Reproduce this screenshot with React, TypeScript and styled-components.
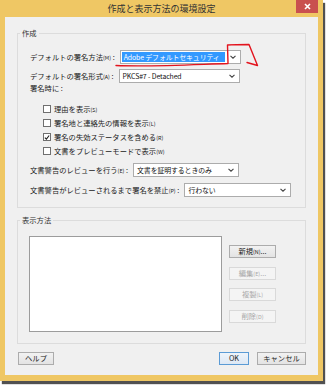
import React from 'react';
import styled, { createGlobalStyle } from 'styled-components';

const GlobalStyle = createGlobalStyle`
  html, body {
    margin: 0;
    padding: 0;
    background: #ffffff;
  }
  body {
    font-family: "Noto Sans CJK JP", "Noto Sans", sans-serif;
    color: #1a1a1a;
  }
`;

const Stage = styled.div`
  position: relative;
  width: 327px;
  height: 386px;
`;

const Window = styled.div`
  width: 323px;
  height: 381px;
  box-sizing: border-box;
  padding: 0 5px 6px 5px;
  background: #efc764;
  display: flex;
  flex-direction: column;
  box-shadow: 2px 3px 1px rgba(50, 50, 50, 0.85);
`;

const TitleBar = styled.div`
  height: 17px;
  display: grid;
  grid-template-columns: 1fr auto 1fr;
  align-items: start;
`;

const Title = styled.div`
  grid-column: 2;
  font-size: 9px;
  line-height: 17px;
  color: #333;
  white-space: nowrap;
`;

const CloseButton = styled.div`
  grid-column: 3;
  justify-self: end;
  width: 22px;
  height: 13px;
  background: #c9504f;
  display: flex;
  align-items: center;
  justify-content: center;
`;

const Content = styled.div`
  flex: 1;
  background: #f0f0f0;
  padding: 11px 12px 0 12px;
  display: flex;
  flex-direction: column;
`;

const Group = styled.fieldset<{ $pad: string; $mt?: number }>`
  margin: ${p => p.$mt ?? 0}px 0 0 0;
  padding: ${p => p.$pad};
  border: 1px solid #dcdcdc;
  min-width: 0;
`;

const GroupTitle = styled.legend<{ $ml: number }>`
  margin-left: ${p => p.$ml}px;
  padding: 0 2px;
  font-size: 7.3px;
  line-height: 10px;
  color: #333;
`;

const Column = styled.div`
  display: flex;
  flex-direction: column;
`;

const FieldRow = styled.div<{ $mt?: number }>`
  display: flex;
  align-items: center;
  gap: 5px;
  height: 14px;
  margin-top: ${p => p.$mt ?? 0}px;
`;

const Label = styled.span`
  font-size: 7.3px;
  line-height: 10px;
  white-space: nowrap;
`;

const Key = styled.span`
  font-size: 5.4px;
`;

const Caption = styled.div`
  height: 10px;
  font-size: 7.3px;
  line-height: 10px;
`;

const CheckRow = styled.label<{ $mt?: number }>`
  display: flex;
  align-items: center;
  gap: 3px;
  height: 14px;
  padding-left: 13px;
  margin-top: ${p => p.$mt ?? 0}px;
`;

const Box = styled.span`
  width: 8px;
  height: 8px;
  box-sizing: border-box;
  border: 1px solid #6f6f6f;
  background: #fff;
  display: flex;
  align-items: center;
  justify-content: center;
`;

const Select = styled.div<{ $w: number }>`
  width: ${p => p.$w}px;
  height: 14px;
  box-sizing: border-box;
  border: 1px solid #acacac;
  background: #fff;
  display: flex;
  align-items: stretch;
`;

const SelectValue = styled.div<{ $hi?: boolean }>`
  flex: 1;
  margin: ${p => (p.$hi ? '1px' : '0')};
  padding-left: ${p => (p.$hi ? '2px' : '3px')};
  background: ${p => (p.$hi ? '#3399ff' : 'transparent')};
  color: ${p => (p.$hi ? '#fff' : '#111')};
  font-size: 6.9px;
  letter-spacing: -0.1px;
  line-height: ${p => (p.$hi ? '10px' : '12px')};
  white-space: nowrap;
  overflow: hidden;
`;

const SelectArrow = styled.div`
  width: 14px;
  display: flex;
  align-items: center;
  justify-content: center;
`;

const ManageRow = styled.div`
  display: flex;
  gap: 7px;
`;

const ListBox = styled.div`
  width: 193px;
  height: 96px;
  box-sizing: border-box;
  border: 1px solid #9c9c9c;
  background: #fff;
`;

const ButtonColumn = styled.div`
  display: flex;
  flex-direction: column;
  gap: 8.5px;
  margin-top: 9px;
`;

const Button = styled.div<{ $w: number; $disabled?: boolean; $default?: boolean }>`
  width: ${p => p.$w}px;
  height: 13px;
  box-sizing: border-box;
  border: 1px solid ${p => (p.$disabled ? '#d9d9d9' : p.$default ? '#5b9bd5' : '#acacac')};
  background: ${p =>
    p.$disabled ? '#f4f4f4' : p.$default ? 'linear-gradient(#eef4fb, #dde8f4)' : 'linear-gradient(#f2f2f2, #e3e3e3)'};
  color: ${p => (p.$disabled ? '#a8a8a8' : '#222')};
  font-size: 7.3px;
  line-height: 11px;
  text-align: center;
  white-space: nowrap;
`;

const Footer = styled.div`
  display: flex;
  align-items: center;
  margin-top: 8px;
  padding-left: 1px;
  gap: 8px;
`;

const Spacer = styled.div`
  flex: 1;
`;

const Annotation = styled.svg`
  position: absolute;
  left: 0;
  top: 0;
  pointer-events: none;
`;

const Chevron = () => (
  <svg width="6" height="4" viewBox="0 0 6 4">
    <path d="M0.5 0.8 L3 3.2 L5.5 0.8" fill="none" stroke="#444" strokeWidth="1.1" />
  </svg>
);

const CheckMark = () => (
  <svg width="7" height="7" viewBox="0 0 7 7">
    <path d="M1 3.6 L2.8 5.4 L6 1.2" fill="none" stroke="#222" strokeWidth="1.3" />
  </svg>
);

function Dropdown({ w, value, hi }: { w: number; value: string; hi?: boolean }) {
  return (
    <Select $w={w}>
      <SelectValue $hi={hi}>{value}</SelectValue>
      <SelectArrow>
        <Chevron />
      </SelectArrow>
    </Select>
  );
}

function Check({ text, k, checked, mt }: { text: string; k: string; checked?: boolean; mt?: number }) {
  return (
    <CheckRow $mt={mt}>
      <Box>{checked && <CheckMark />}</Box>
      <Label>
        {text}
        <Key>({k})</Key>
      </Label>
    </CheckRow>
  );
}

export default function App() {
  return (
    <Stage>
      <GlobalStyle />
      <Window>
        <TitleBar>
          <Title>作成と表示方法の環境設定</Title>
          <CloseButton>
            <svg width="7" height="7" viewBox="0 0 7 7">
              <path d="M1 1 L6 6 M6 1 L1 6" stroke="#fff" strokeWidth="1.6" />
            </svg>
          </CloseButton>
        </TitleBar>
        <Content>
          <Group $pad="12px 12px 10px 12px">
            <GroupTitle $ml={-10}>作成</GroupTitle>
            <Column>
              <FieldRow>
                <Label>
                  デフォルトの署名方法<Key>(M)</Key> :
                </Label>
                <Dropdown w={121} value="Adobe デフォルトセキュリティ" hi />
              </FieldRow>
              <FieldRow $mt={5}>
                <Label>
                  デフォルトの署名形式<Key>(A)</Key> :
                </Label>
                <Dropdown w={121} value="PKCS#7 - Detached" />
              </FieldRow>
              <Caption>署名時に :</Caption>
              <Check text="理由を表示" k="S" mt={9} />
              <Check text="署名地と連絡先の情報を表示" k="L" />
              <Check text="署名の失効ステータスを含める" k="R" checked />
              <Check text="文書をプレビューモードで表示" k="W" />
              <FieldRow $mt={5}>
                <Label>
                  文書警告のレビューを行う<Key>(E)</Key> :
                </Label>
                <Dropdown w={106} value="文書を証明するときのみ" />
              </FieldRow>
              <FieldRow $mt={6}>
                <Label>
                  文書警告がレビューされるまで署名を禁止<Key>(P)</Key> :
                </Label>
                <Dropdown w={107} value="行わない" />
              </FieldRow>
            </Column>
          </Group>
          <Group $pad="11px 11px 11px 11px" $mt={7}>
            <GroupTitle $ml={-9}>表示方法</GroupTitle>
            <ManageRow>
              <ListBox />
              <ButtonColumn>
                <Button $w={47}>
                  新規<Key>(N)</Key>...
                </Button>
                <Button $w={47} $disabled>
                  編集<Key>(E)</Key>...
                </Button>
                <Button $w={47} $disabled>
                  複製<Key>(L)</Key>
                </Button>
                <Button $w={47} $disabled>
                  削除<Key>(D)</Key>
                </Button>
              </ButtonColumn>
            </ManageRow>
          </Group>
          <Footer>
            <Button $w={36}>ヘルプ</Button>
            <Spacer />
            <Button $w={30} $default>
              OK
            </Button>
            <Button $w={49}>キャンセル</Button>
          </Footer>
        </Content>
      </Window>
      <Annotation width="327" height="386" viewBox="0 0 327 386">
        <path
          d="M116 65.5 C150 67 195 64.5 228 63.5 M228 63.5 L227.5 45 C235 44.5 242 44.5 249 44.5 L257.5 65.5 L247 62.5"
          fill="none"
          stroke="#e3141e"
          strokeWidth="1.4"
          strokeLinecap="round"
          strokeLinejoin="round"
        />
      </Annotation>
    </Stage>
  );
}
